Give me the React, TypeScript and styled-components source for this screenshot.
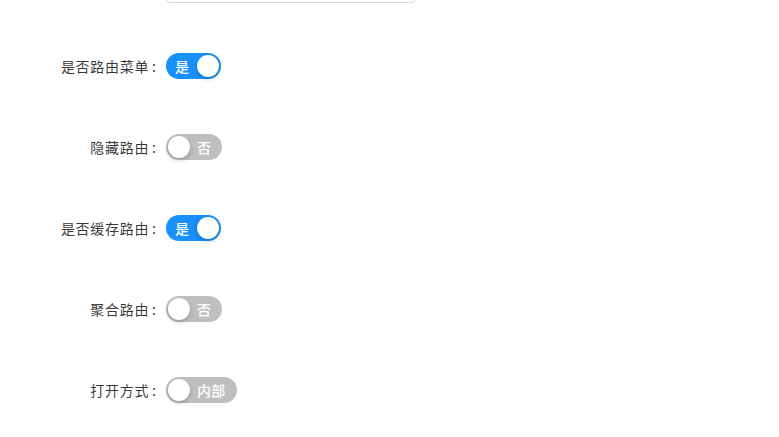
import React from "react";
import styled, { createGlobalStyle } from "styled-components";

const Global = createGlobalStyle`
  html, body { margin: 0; padding: 0; background: #fff; overflow: hidden; }
  body { font-family: "Noto Sans CJK SC", "Noto Sans", sans-serif; }
`;

const Form = styled.div`
  display: flex;
  flex-direction: column;
  gap: 49px;
  margin-top: -31px;
`;

const Row = styled.div`
  display: flex;
  align-items: center;
  height: 32px;
`;

const InputRow = styled(Row)`
  align-items: flex-start;
`;

const Label = styled.label`
  width: 166px;
  box-sizing: border-box;
  text-align: right;
  font-size: 14px;
  letter-spacing: 0.7px;
  color: rgba(0, 0, 0, 0.8);
  white-space: nowrap;
  &::after {
    content: ":";
    letter-spacing: 0;
    margin: 0 10px 0 3px;
  }
`;

const Spacer = styled.span`
  width: 166px;
  flex: none;
`;

const Input = styled.div`
  width: 250px;
  height: 34px;
  box-sizing: border-box;
  border: 1px solid #d9d9d9;
  border-radius: 4px;
  background: #fff;
`;

const SwitchBox = styled.button<{ $on: boolean }>`
  position: relative;
  height: 26px;
  min-width: 55px;
  box-sizing: border-box;
  border: none;
  border-radius: 13px;
  background: ${(p) => (p.$on ? "#1890ff" : "#bfbfbf")};
  padding: ${(p) => (p.$on ? "0 32px 0 9px" : "0 11px 0 31px")};
  display: flex;
  align-items: center;
  cursor: pointer;
  font-family: "Noto Sans CJK SC", sans-serif;
`;

const SwitchText = styled.span`
  color: #fff;
  font-size: 14px;
  font-weight: 500;
  letter-spacing: 0.3px;
  line-height: 26px;
`;

const Handle = styled.span<{ $on: boolean }>`
  position: absolute;
  top: 2px;
  left: ${(p) => (p.$on ? "calc(100% - 24px)" : "2px")};
  width: 22px;
  height: 22px;
  border-radius: 50%;
  background: #fff;
  box-shadow: 0 2px 4px 0 rgba(0, 35, 11, 0.25);
`;

function Switch({ on, text }: { on: boolean; text: string }) {
  return (
    <SwitchBox $on={on} type="button">
      <SwitchText>{text}</SwitchText>
      <Handle $on={on} />
    </SwitchBox>
  );
}

const rows = [
  { label: "是否路由菜单", on: true, text: "是" },
  { label: "隐藏路由", on: false, text: "否" },
  { label: "是否缓存路由", on: true, text: "是" },
  { label: "聚合路由", on: false, text: "否" },
  { label: "打开方式", on: false, text: "内部" },
];

export default function App() {
  return (
    <>
      <Global />
      <Form>
        <InputRow>
          <Spacer />
          <Input />
        </InputRow>
        {rows.map((r) => (
          <Row key={r.label}>
            <Label>{r.label}</Label>
            <Switch on={r.on} text={r.text} />
          </Row>
        ))}
      </Form>
    </>
  );
}
